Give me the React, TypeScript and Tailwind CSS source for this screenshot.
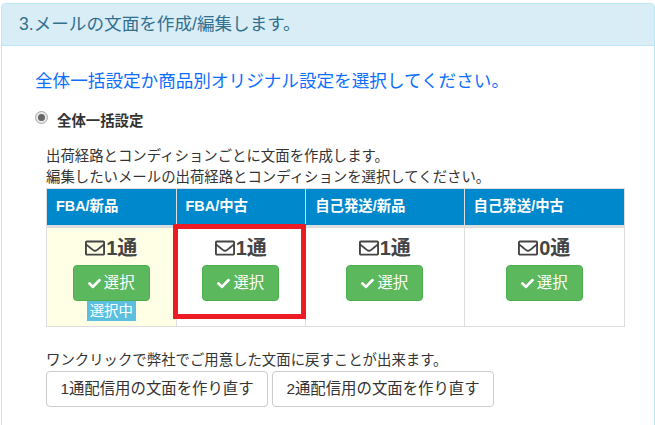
import React from 'react';
import { FaCheck, FaRegEnvelope } from 'react-icons/fa';

const font = "font-['Liberation_Sans','Noto_Sans_CJK_JP',sans-serif]";

const columns = [
  { label: 'FBA/新品', count: '1通', width: 'w-[129px]', active: true },
  { label: 'FBA/中古', count: '1通', width: 'w-[130px]', active: false },
  { label: '自己発送/新品', count: '1通', width: 'w-[159px]', active: false },
  { label: '自己発送/中古', count: '0通', width: 'w-[161px]', active: false },
];

const App: React.FC = () => {
  return (
    <div className={`${font} h-[425px] w-[655px] overflow-hidden bg-white pl-px pt-[3px] text-[14.4px] text-[#333]`}>
      <div className="h-[500px] rounded-t border border-[#bce8f1]">
        <div className="flex h-[42px] items-center border-b border-[#bce8f1] bg-[#d9edf7] pb-[1px] pl-[17px] text-[17.6px] text-[#31708f]">
          3.メールの文面を作成/編集します。
        </div>

        <div className="pl-[33px] pt-[22px]">
          <p className="text-[17.6px] leading-[26px] text-[#0d6efd]">全体一括設定か商品別オリジナル設定を選択してください。</p>

          <div className="mt-[15px] flex items-start">
            <span className="mt-[2px] flex h-[13px] w-[13px] items-center justify-center rounded-full border border-[#aaa] bg-[#e8e8e8]">
              <span className="h-[7px] w-[7px] rounded-full bg-[#666]" />
            </span>
            <span className="ml-[9px] mt-[1px] font-bold leading-[22px]">全体一括設定</span>
          </div>

          <div className="ml-[11px] mt-[14px] w-[579px]">
            <p className="leading-[21px]">出荷経路とコンディションごとに文面を作成します。</p>
            <p className="leading-[21px]">編集したいメールの出荷経路とコンディションを選択してください。</p>

            <div className="relative">
              <div className="flex border border-[#ddd] bg-[#0088cc]">
                {columns.map((c, i) => (
                  <div
                    key={c.label}
                    className={`flex h-[36px] items-center pl-[9px] font-bold text-white ${c.width} ${i > 0 ? 'border-l border-[#ddd]' : ''}`}
                  >
                    {c.label}
                  </div>
                ))}
              </div>
              <div className="flex border-x border-b border-[#ddd]">
                {columns.map((c, i) => (
                  <div
                    key={c.label}
                    className={`flex h-[100px] flex-col items-center border-t-2 border-[#ddd] pt-[8px] ${c.width} ${i > 0 ? 'border-l' : ''} ${c.active ? 'bg-[#ffffe6]' : 'bg-white'}`}
                  >
                    <div className="flex h-[24px] items-center text-[20px] font-bold text-[#444]">
                      <FaRegEnvelope className="mr-[1px] text-[20px]" />
                      {c.count}
                    </div>
                    <button className="mt-[5px] flex h-[36px] w-[77px] items-center justify-center rounded border border-[#4cae4c] bg-[#5cb85c] text-[15.4px] text-white">
                      <FaCheck className="mr-[3px] text-[13px]" />
                      選択
                    </button>
                    {c.active && (
                      <span className="bg-[#5bc0de] px-[3px] leading-[20px] text-white">選択中</span>
                    )}
                  </div>
                ))}
              </div>
              <div className="absolute left-[127px] top-[36px] h-[95px] w-[133px] border-[5px] border-[#ed1c24]" />
            </div>

            <p className="mt-[23px] leading-[21px]">ワンクリックで弊社でご用意した文面に戻すことが出来ます。</p>
            <div className="flex gap-[4px]">
              <button className="h-[36px] w-[222px] rounded border border-[#ccc] bg-white text-[15.4px]">1通配信用の文面を作り直す</button>
              <button className="h-[36px] w-[222px] rounded border border-[#ccc] bg-white text-[15.4px]">2通配信用の文面を作り直す</button>
            </div>
          </div>
        </div>
      </div>
    </div>
  );
};

export default App;
